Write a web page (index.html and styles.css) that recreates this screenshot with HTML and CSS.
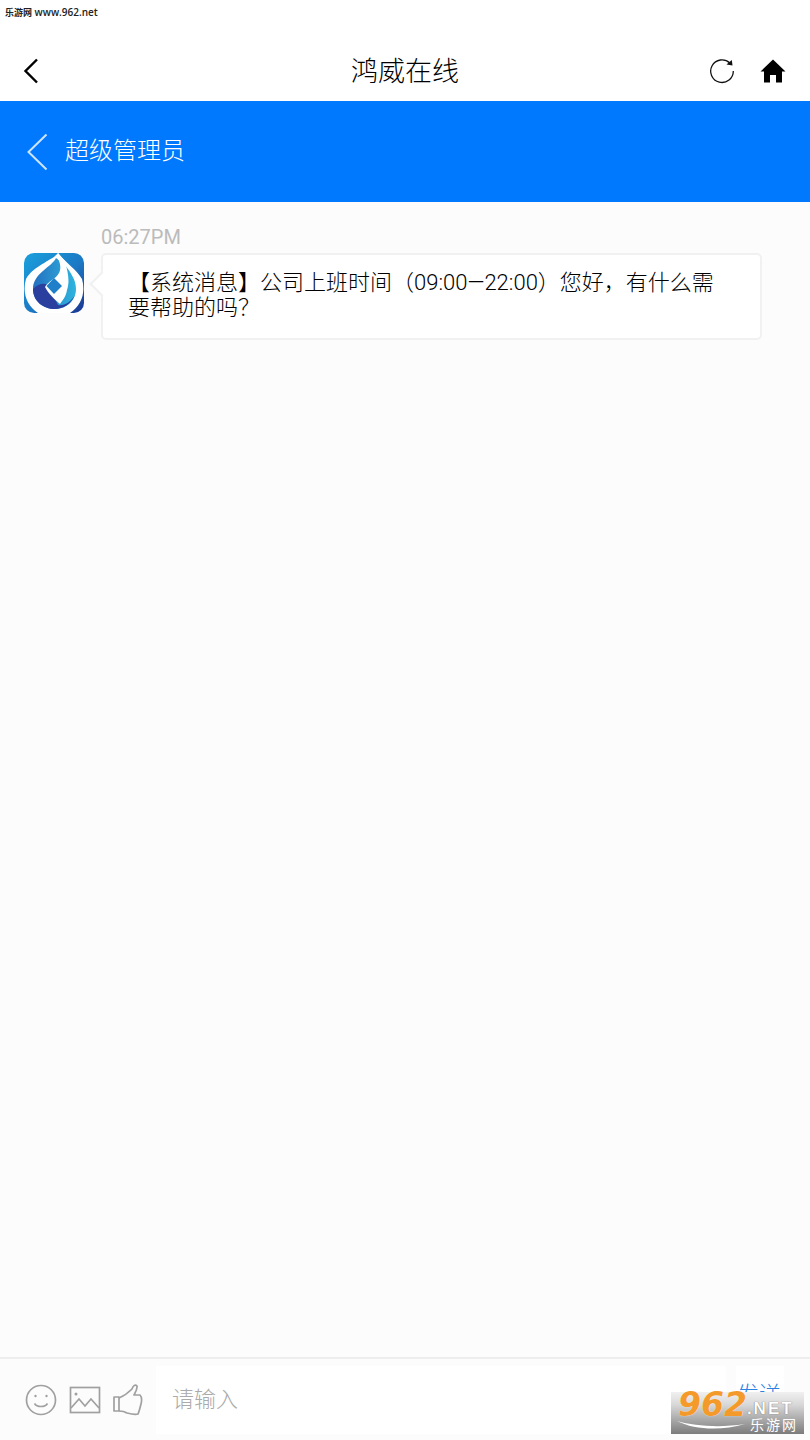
FILE: index.html
```html
<!DOCTYPE html>
<html lang="zh-CN">
<head>
    <meta charset="UTF-8">
    <meta name="viewport" content="width=device-width, initial-scale=1.0">
    <title>鸿威在线</title>
    <link rel="stylesheet" href="styles.css">
</head>
<body>
    <div id="page">
        <div class="status"><span class="status-cn">乐游网</span> www.962.net</div>
        <div class="nav">
            <svg class="nav-back" width="16" height="26" viewBox="0 0 16 26"><path d="M14 1.500 2.500 13 14 24.500" fill="none" stroke="#000" stroke-width="2.400"/></svg>
            <div class="nav-title">鸿威在线</div>
            <svg class="nav-refresh" width="26" height="26" viewBox="0 0 26 26"><path d="M20.800 5A11.300 11.300 0 1 0 24.300 13" fill="none" stroke="#111" stroke-width="1.300"/><path d="M17.500 6.500 23.500 7.500 22.800 2Z" fill="#111"/></svg>
            <svg class="nav-home" width="26" height="24" viewBox="0 0 26 24"><path d="M13 .5 25.500 12.500H22V23.500H16V16H10V23.500H4V12.500H.5Z" fill="#000"/></svg>
        </div>
        <div class="chat-head">
            <svg class="chat-back" width="22" height="38" viewBox="0 0 22 38"><path d="M20.500 1.500 2.500 19 20.500 36.500" fill="none" stroke="#cfe5ff" stroke-width="2"/></svg>
            <span class="chat-name">超级管理员</span>
        </div>
        <div class="chat-body">
            <div class="msg">
                <svg class="avatar" width="60" height="60" viewBox="0 0 60 60">
                    <defs>
                        <linearGradient id="bg" x1="0" y1="0" x2="1" y2="1"><stop offset="0" stop-color="#1aa0dc"/><stop offset=".55" stop-color="#1b78c4"/><stop offset="1" stop-color="#1b3590"/></linearGradient>
                        <linearGradient id="drop" x1="0" y1="0" x2="1" y2="0"><stop offset="0" stop-color="#2470c0"/><stop offset="1" stop-color="#2fb4de"/></linearGradient>
                    </defs>
                    <rect width="60" height="60" rx="10" fill="url(#bg)"/>
                    <path d="M34 0C28 8 10 12 2 26C-2 40 3 53 14 60H46C57 53 62 40 58 26C52 16 42 10 34 0Z" fill="#fff"/>
                    <path d="M32 5C28 14 9 20 9 36C9 48 19 56 31 56C43 56 52 47 52 36C52 27 47 20 41 12L36 8Z" fill="url(#drop)"/>
                    <path d="M9 36C15 30 20 30 24 32L34 52C40 53 46 50 51 42C47 51 39 56 31 56C19 56 9 48 9 36Z" fill="#2b3f9f"/>
                    <path d="M34 0 41 8C44 20 46 28 43 37C42 44 38 48 36 51C31 47 24 40 21 34C24 28 32 26 35 20C37 16 37 10 33 4Z" fill="#fff"/>
                    <path d="M30 25 38 33 30 41 22.500 33Z" fill="#1f7fc8"/>
                </svg>
                <div class="msg-main">
                    <div class="msg-time">06:27PM</div>
                    <div class="bubble">【系统消息】公司上班时间（09:00—22:00）您好，有什么需要帮助的吗？</div>
                </div>
            </div>
        </div>
        <div class="footer">
            <svg class="tool" width="32" height="32" viewBox="0 0 32 32"><g fill="none" stroke="#a0a0a0" stroke-width="1.700"><circle cx="16" cy="16" r="14.500"/><path d="M9.500 19.500C12 23.500 20 23.500 22.500 19.500"/></g><circle cx="10.500" cy="12" r="1.200" fill="#a0a0a0"/><circle cx="21.500" cy="12" r="1.200" fill="#a0a0a0"/></svg>
            <svg class="tool" width="32" height="28" viewBox="0 0 32 28"><g fill="none" stroke="#a0a0a0" stroke-width="1.700"><rect x="1.500" y="1.500" width="29" height="25"/><path d="M2 22 10 13 16 20 22 13 30 22"/></g><circle cx="7" cy="8" r="1.500" fill="#a0a0a0"/></svg>
            <svg class="tool" width="30" height="32" viewBox="0 0 30 32"><g fill="none" stroke="#a0a0a0" stroke-width="1.700" stroke-linejoin="round"><path d="M1 13H6V27H1Z"/><path d="M6 14C11 12 16 8 19 5C20 2 22 0 24 2C24.500 5 22 9 21 11H27C29 13 29 16 28 20C27 24 26 28 25 30C22 31 18 30 14 29C11 27 9 27 6 27"/></g></svg>
            <div class="input">请输入</div>
            <div class="send">发送</div>
            <div class="watermark">
                <svg class="wm-swoosh" width="70" height="10" viewBox="0 0 70 10"><path d="M0 1C18 6 42 8 68 4C44 11 18 10 0 1Z" fill="#fff"/></svg>
                <div class="wm-top"><span class="wm-num">962</span><span class="wm-net">.NET</span></div>
                <div class="wm-cn">乐游网</div>
            </div>
        </div>
    </div>
</body>
</html>
```

FILE: styles.css
```css
* {
    box-sizing: border-box;
}
body {
    margin: 0;
    font-family: Roboto, "Noto Sans CJK SC", sans-serif;
}
#page {
    position: relative;
    width: 810px;
    height: 1440px;
    display: flex;
    flex-direction: column;
    background-color: #fcfcfc;
    overflow: hidden;
}
.status {
    height: 40px;
    padding: 5px 0 0 5px;
    font-size: 10px;
    line-height: 14px;
    color: #222;
    background-color: #fff;
    font-family: "Open Sans", "Noto Sans CJK SC", sans-serif;
    font-weight: 600;
}
.status-cn {
    font-size: 9px;
}
.nav {
    height: 61px;
    display: flex;
    align-items: center;
    position: relative;
    background-color: #fff;
    padding-left: 23px;
    padding-right: 24px;
}
.nav-title {
    position: absolute;
    top: 2px;
    left: 0;
    right: 0;
    text-align: center;
    font-size: 27px;
    font-weight: 300;
    line-height: 61px;
    color: #000;
}
.nav-refresh {
    margin-left: auto;
    margin-right: 25px;
}
.chat-head {
    height: 101px;
    display: flex;
    align-items: center;
    padding-left: 26px;
    gap: 17px;
    background-color: #0079fe;
    color: #fff;
    font-size: 24px;
}
.chat-name {
    padding-bottom: 7px;
    font-weight: 300;
}
.chat-body {
    flex: 1;
    padding: 25px 48px 0 24px;
}
.msg {
    display: flex;
    align-items: flex-start;
}
.avatar {
    margin-top: 26px;
    margin-right: 17px;
    flex: none;
}
.msg-main {
    flex: 1;
}
.msg-time {
    font-size: 20px;
    line-height: 20px;
    color: #bbb;
    margin-bottom: 6px;
}
.bubble {
    position: relative;
    margin-left: 0;
    height: 87px;
    padding: 15px 38px 0 25px;
    font-size: 22px;
    font-weight: 300;
    line-height: 25px;
    color: #000;
    background-color: #fff;
    border: 2px solid #f1f1f1;
    border-radius: 5px;
}
.bubble::before {
    content: '';
    position: absolute;
    left: -10px;
    top: 20px;
    width: 16px;
    height: 16px;
    background-color: #fff;
    border-left: 2px solid #f1f1f1;
    border-bottom: 2px solid #f1f1f1;
    transform: rotate(45deg);
}
.footer {
    height: 83px;
    display: flex;
    align-items: center;
    padding-left: 25px;
    border-top: 2px solid #eee;
    position: relative;
}
.tool {
    flex: none;
    margin-right: 12px;
}
.input {
    width: 570px;
    height: 68px;
    margin-left: 1px;
    padding-left: 16px;
    background-color: #fff;
    color: #aaa;
    font-size: 22px;
    font-weight: 300;
    line-height: 68px;
}
.send {
    width: 48px;
    height: 68px;
    margin-left: 10px;
    padding-left: 1px;
    background-color: #fff;
    color: #2a82e4;
    font-size: 22px;
    font-weight: 300;
    line-height: 58px;
}
.watermark {
    position: absolute;
    left: 671px;
    top: 33px;
    width: 133px;
    height: 42px;
    padding-left: 7px;
    background: linear-gradient(#f0f0f0, #d8d8d8 30%, #7c7c7c);
}
.wm-swoosh {
    position: absolute;
    left: 6px;
    top: 28px;
}
.wm-top {
    display: flex;
    align-items: flex-end;
    height: 26px;
}
.wm-num {
    font-family: "DejaVu Sans", sans-serif;
    font-style: italic;
    font-weight: 700;
    font-size: 33px;
    line-height: 27px;
    color: #f39a2b;
    text-shadow: 0 0 1px #fff;
}
.wm-net {
    font-family: "Liberation Sans", sans-serif;
    font-weight: 700;
    font-size: 17px;
    line-height: 19px;
    letter-spacing: 2px;
    color: #fff;
    text-shadow: 0 0 1px #444;
}
.wm-cn {
    margin-left: 72px;
    margin-top: -2px;
    font-family: "Noto Sans CJK SC", sans-serif;
    font-size: 14px;
    line-height: 16px;
    letter-spacing: 2px;
    color: #fff;
}
```
